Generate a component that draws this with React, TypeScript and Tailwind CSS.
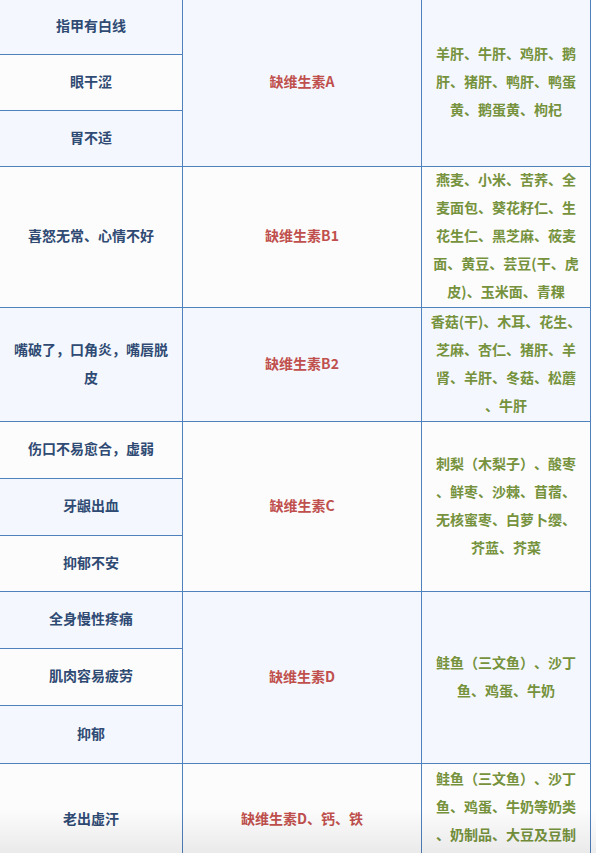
const BLUE = 'bg-[#f4f8fe]'
const WHITE = 'bg-[#fcfcfc]'

type Group = {
  symptoms: { lines: string[]; bg: string }[]
  vitamin: string
  foods: string[]
  bg: string
  top?: boolean
}

const GROUPS: Group[] = [
  {
    symptoms: [
      { lines: ['指甲有白线'], bg: BLUE },
      { lines: ['眼干涩'], bg: WHITE },
      { lines: ['胃不适'], bg: BLUE },
    ],
    vitamin: '缺维生素A',
    foods: ['羊肝、牛肝、鸡肝、鹅', '肝、猪肝、鸭肝、鸭蛋', '黄、鹅蛋黄、枸杞'],
    bg: BLUE,
  },
  {
    symptoms: [{ lines: ['喜怒无常、心情不好'], bg: WHITE }],
    vitamin: '缺维生素B1',
    foods: ['燕麦、小米、苦荞、全', '麦面包、葵花籽仁、生', '花生仁、黑芝麻、莜麦', '面、黄豆、芸豆(干、虎', '皮)、玉米面、青稞'],
    bg: WHITE,
  },
  {
    symptoms: [{ lines: ['嘴破了，口角炎，嘴唇脱', '皮'], bg: BLUE }],
    vitamin: '缺维生素B2',
    foods: ['香菇(干)、木耳、花生、', '芝麻、杏仁、猪肝、羊', '肾、羊肝、冬菇、松蘑', '、牛肝'],
    bg: BLUE,
  },
  {
    symptoms: [
      { lines: ['伤口不易愈合，虚弱'], bg: WHITE },
      { lines: ['牙龈出血'], bg: BLUE },
      { lines: ['抑郁不安'], bg: WHITE },
    ],
    vitamin: '缺维生素C',
    foods: ['刺梨（木梨子）、酸枣', '、鲜枣、沙棘、苜蓿、', '无核蜜枣、白萝卜缨、', '芥蓝、芥菜'],
    bg: WHITE,
  },
  {
    symptoms: [
      { lines: ['全身慢性疼痛'], bg: BLUE },
      { lines: ['肌肉容易疲劳'], bg: WHITE },
      { lines: ['抑郁'], bg: BLUE },
    ],
    vitamin: '缺维生素D',
    foods: ['鲑鱼（三文鱼）、沙丁', '鱼、鸡蛋、牛奶'],
    bg: BLUE,
  },
  {
    symptoms: [{ lines: ['老出虚汗'], bg: WHITE }],
    vitamin: '缺维生素D、钙、铁',
    foods: ['鲑鱼（三文鱼）、沙丁', '鱼、鸡蛋、牛奶等奶类', '、奶制品、大豆及豆制'],
    bg: WHITE,
    top: true,
  },
]

const SPAN: Record<number, string> = {
  1: 'row-span-1',
  3: 'row-span-3',
}

function Lines({ lines }: { lines: string[] }) {
  return (
    <div className="flex flex-col items-center">
      {lines.map((l, i) => (
        <span key={i} className="whitespace-nowrap">{l}</span>
      ))}
    </div>
  )
}

export default function App() {
  return (
    <div
      className="min-h-screen bg-white text-[14px] leading-[28px] font-bold [text-spacing-trim:space-all]"
      style={{ fontFamily: '"Noto Sans CJK SC", "Noto Sans", sans-serif' }}
    >
      <div className="grid w-[591px] grid-cols-[182px_238px_168px] grid-rows-[54px_55px_55px_140px_113px_56px_56px_55px_56px_56px_57px_112px] gap-px bg-[#4f81bd] pr-px">
        {GROUPS.map((g, gi) =>
          g.symptoms.map((s, si) => (
            <>
              <div
                key={`s-${gi}-${si}`}
                className={`flex items-center justify-center px-2 pb-[4px] text-center text-[#2f4a73] ${s.bg}`}
              >
                <Lines lines={s.lines} />
              </div>
              {si === 0 && (
                <div
                  key={`v-${gi}`}
                  className={`flex items-center justify-center px-2 pb-[4px] text-[#c0504d] ${g.bg} ${SPAN[g.symptoms.length]}`}
                >
                  {g.vitamin}
                </div>
              )}
              {si === 0 && (
                <div
                  key={`f-${gi}`}
                  className={`flex justify-center px-2 text-[#76923c] ${g.top ? 'items-start' : 'items-center pb-[4px]'} ${g.bg} ${SPAN[g.symptoms.length]}`}
                >
                  <Lines lines={g.foods} />
                </div>
              )}
            </>
          ))
        )}
      </div>
      <div className="pointer-events-none fixed inset-x-0 bottom-0 h-[44px] bg-gradient-to-b from-transparent to-[rgba(0,0,0,0.07)]" />
    </div>
  )
}
